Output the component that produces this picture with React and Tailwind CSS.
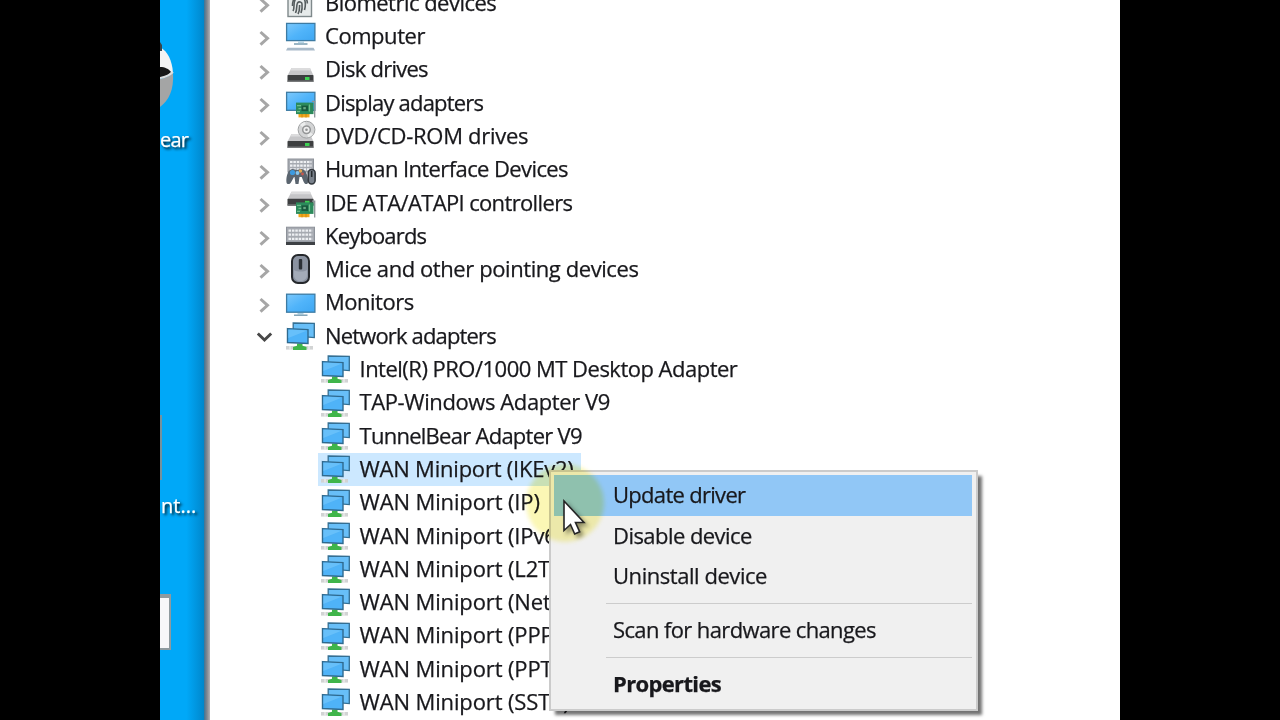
import { useId } from "react";

function Screen({ x, y, w, h }) {
  const id = useId();
  return (
    <>
      <defs>
        <linearGradient id={id} x1="0" y1="0" x2="1" y2="1">
          <stop offset="0" stopColor="#7cc8fb" />
          <stop offset="0.5" stopColor="#50b4fa" />
          <stop offset="1" stopColor="#3ea6f2" />
        </linearGradient>
      </defs>
      <rect
        x={x}
        y={y}
        width={w}
        height={h}
        fill={`url(#${id})`}
        stroke="#3d7ba3"
        strokeWidth="1.3"
      />
    </>
  );
}

function Drive({ y = 0 }) {
  return (
    <g transform={`translate(0 ${y})`}>
      <path d="M5.5 0H24l3.500 7.500h-26z" fill="#c6c6c8" />
      <path d="M5.500 0H24l1 2.500H4.500z" fill="#dcdcdd" />
      <rect x="1.500" y="7" width="26" height="7" rx="0.8" fill="#3d3f40" />
      <rect x="1.500" y="12.500" width="26" height="1.500" fill="#77797a" />
      <rect x="19" y="9" width="4.500" height="3" fill="#3fd054" />
    </g>
  );
}

function Card({ y = 0 }) {
  return (
    <g transform={`translate(0 ${y})`}>
      <rect x="12.500" y="13" width="11" height="3.800" fill="#f2a71c" />
      <path d="M16 13v4M20 13v4" stroke="#c67e10" strokeWidth="0.8" />
      <rect x="10" y="2" width="17.500" height="11.500" fill="#2c8a5b" />
      <path
        d="M11 5h4M11 11h3M23.500 4v7M12.500 8h3"
        stroke="#6fbf8c"
        strokeWidth="1.2"
      />
      <rect x="15.500" y="5" width="6.500" height="5.500" fill="#17593c" />
      <rect x="17.300" y="6.500" width="2.500" height="2.200" fill="#69a983" />
      <path d="M26 0.700h2.700V17" fill="none" stroke="#8c9498" strokeWidth="1.3" />
    </g>
  );
}

function Keys({ x, y, w, h }) {
  return (
    <>
      <rect x={x} y={y} width={w} height={h} fill="#a6aab1" stroke="#8d929a" />
      {[0.2, 0.48, 0.76].map((f) => (
        <path
          key={f}
          d={`M${x + 2} ${y + h * f + 0.4}H${x + w - 2}`}
          stroke="#eef0f3"
          strokeWidth="2.2"
          strokeDasharray="2.5 0.9"
        />
      ))}
    </>
  );
}

const ICONS = {
  biometric: (
    <>
      <rect x="2" y="4" width="23.500" height="24.500" fill="#e6eaea" stroke="#7f898b" strokeWidth="1.400" />
      <g fill="none" stroke="#565d5f" strokeWidth="1.600">
        <path d="M7 23c2-3 0-8 2-11 3-4 9-3 10 1 .6 3 .4 6-.5 9" />
        <path d="M9.500 25c2-4 .5-7 2-10 1.500-2 4.500-1 4.500 1 .4 3 0 6-1 9" />
        <path d="M12 26c1.800-3 1.500-6 1.600-9M6.500 18c0-5 1-8 4-9.500M14 7.500c4 0 7.500 3 7.300 8" />
      </g>
    </>
  ),
  computer: (
    <>
      <Screen x={0.6} y={2.4} w={28.3} h={17.2} />
      <path d="M12 20h6v2h-6z" fill="#b9d6e6" />
      <path d="M8 23h13.500" stroke="#6f97ad" strokeWidth="1.400" />
      <path d="M1.500 26.800h26l1.500 2.800H0z" fill="#a9bac9" />
    </>
  ),
  disk: <Drive y={13} />,
  display: (
    <>
      <Screen x={0.6} y={4.3} w={28.3} h={18} />
      <Card y={12.6} />
    </>
  ),
  dvd: (
    <>
      <Drive y={13} />
      <circle cx="20.500" cy="8.700" r="8.400" fill="#d3d4d5" stroke="#a0a2a3" strokeWidth="1" />
      <path d="M20.500 8.700 14 4a8 8 0 0 1 5-3zM20.500 8.700l6.500 4.500a8 8 0 0 1-5 3z" fill="#eceded" />
      <circle cx="20.500" cy="8.700" r="3.800" fill="#eeeeee" stroke="#939596" strokeWidth="1.500" />
      <circle cx="20.500" cy="8.700" r="1.300" fill="#909293" />
    </>
  ),
  hid: (
    <>
      <Keys x={2} y={4} w={25.5} h={13} />
      <path
        d="M4 15c3-2 5 0 7 0s4-2 7 0c3 2 4.500 9 4 12.500-.5 2.500-3.500 2-4.500-1l-1.800-4.500h-2.200l-1 7h-3l-1-7H8L5.500 26.500c-1 3-4.500 3.500-5 1C0 24 1 17 4 15z"
        fill="#5b656f"
      />
      <circle cx="6.500" cy="17.500" r="2.600" fill="#3d9adf" />
      <circle cx="14.500" cy="16" r="1.700" fill="#e3a650" />
      <circle cx="11.500" cy="18" r="1.900" fill="#83c5ee" />
      <circle cx="16.500" cy="19" r="1.400" fill="#c9574c" />
      <rect x="22.300" y="14.500" width="6.800" height="14.500" rx="3.400" fill="#7a828c" stroke="#34393f" strokeWidth="1.600" />
      <path d="M25.700 16v6" stroke="#252a2e" strokeWidth="1.600" />
    </>
  ),
  ide: (
    <>
      <Drive y={3.8} />
      <Card y={12.4} />
    </>
  ),
  keyboard: (
    <>
      <Keys x={0.5} y={6.2} w={28} h={14.8} />
      <rect x="0" y="21" width="29" height="3" fill="#3e4145" />
    </>
  ),
  mouse: (
    <>
      <rect x="6" y="1" width="17" height="28" rx="6" fill="#8b93a1" stroke="#25282c" strokeWidth="2" />
      <path d="M8 16c3 2 10 2 13 0v5c0 8-13 8-13 0z" fill="#a3abb8" />
      <rect x="12.800" y="5" width="3.400" height="10.500" rx="1" fill="#2b3036" />
    </>
  ),
  monitor: (
    <>
      <Screen x={0.6} y={6.2} w={28.3} h={18} />
      <path d="M11.500 25h6v1.500h-6z" fill="#a9cfe3" />
      <path d="M8 27.200h13.500" stroke="#6f97ad" strokeWidth="1.300" />
    </>
  ),
  network: (
    <>
      <rect x="0" y="25" width="27" height="3.600" fill="#d2d4d4" />
      <path d="M4 25v3.600M23 25v3.600" stroke="#f1f1f1" strokeWidth="1.200" />
      <path d="M11 22.500h5.500v2.300l4 1.200v3H7v-3l4-1.200z" fill="#3fb54a" />
      <path d="M7.200 2 28.300 2.400v14.200L7.200 15z" fill="#68bff8" stroke="#346f93" strokeWidth="1.300" />
      <path d="M1.500 7.600 22 8.600v13.800L1.500 21.500z" fill="#4fb3f8" stroke="#2f6a8f" strokeWidth="1.400" />
      <path d="M2.300 8.500 21.200 9.500 2.300 17z" fill="#78c8fb" opacity="0.6" />
    </>
  ),
};

const CATEGORIES = [
  { icon: "biometric", label: "Biometric devices", tracking: "tracking-[-0.52px]" },
  { icon: "computer", label: "Computer", tracking: "tracking-[-0.45px]" },
  { icon: "disk", label: "Disk drives", tracking: "tracking-[-0.76px]" },
  { icon: "display", label: "Display adapters", tracking: "tracking-[-0.8px]" },
  { icon: "dvd", label: "DVD/CD-ROM drives", tracking: "tracking-[-0.28px]" },
  { icon: "hid", label: "Human Interface Devices", tracking: "tracking-[-0.6px]" },
  { icon: "ide", label: "IDE ATA/ATAPI controllers", tracking: "tracking-[-0.64px]" },
  { icon: "keyboard", label: "Keyboards", tracking: "tracking-[-0.84px]" },
  { icon: "mouse", label: "Mice and other pointing devices", tracking: "tracking-[-0.42px]" },
  { icon: "monitor", label: "Monitors", tracking: "tracking-[-0.5px]" },
  { icon: "network", label: "Network adapters", tracking: "tracking-[-0.84px]", open: true },
];

const ADAPTERS = [
  { label: "Intel(R) PRO/1000 MT Desktop Adapter", tracking: "tracking-[-0.51px]" },
  { label: "TAP-Windows Adapter V9", tracking: "tracking-[-0.4px]" },
  { label: "TunnelBear Adapter V9", tracking: "tracking-[-0.73px]" },
  { label: "WAN Miniport (IKEv2)", tracking: "tracking-[-0.22px]", selected: true },
  { label: "WAN Miniport (IP)", tracking: "tracking-[-0.13px]" },
  { label: "WAN Miniport (IPv6)", tracking: "tracking-[-0.13px]" },
  { label: "WAN Miniport (L2TP)", tracking: "tracking-[-0.13px]" },
  { label: "WAN Miniport (Network Monitor)", tracking: "tracking-[-0.13px]" },
  { label: "WAN Miniport (PPPOE)", tracking: "tracking-[-0.13px]" },
  { label: "WAN Miniport (PPTP)", tracking: "tracking-[-0.13px]" },
  { label: "WAN Miniport (SSTP)", tracking: "tracking-[-0.13px]" },
];

function DeviceIcon({ name }) {
  return (
    <svg width="30" height="30" viewBox="0 0 30 30" className="shrink-0 overflow-visible">
      {ICONS[name]}
    </svg>
  );
}

function Chevron({ open }) {
  return (
    <svg width="16" height="16" viewBox="0 0 16 16" fill="none" className="mr-[13px] mt-1 shrink-0">
      {open ? (
        <path d="M0.800 3.500 7.500 10l6.700-6.500" stroke="#484848" strokeWidth="3" />
      ) : (
        <path d="m3.500 2 7 6.300-7 6.300" stroke="#a6a6a6" strokeWidth="3" />
      )}
    </svg>
  );
}

function DeviceTree() {
  return (
    <div className="-mt-[13.600px] flex flex-col">
      {CATEGORIES.map(({ icon, label, tracking, open }) => (
        <div key={label} className="flex h-[33.300px] shrink-0 items-center pl-[47px]">
          <Chevron open={open} />
          <DeviceIcon name={icon} />
          <span className={`mb-[2.500px] ml-[9px] ${tracking}`}>{label}</span>
        </div>
      ))}
      {ADAPTERS.map(({ label, tracking, selected }) => (
        <div key={label} className="flex h-[33.300px] shrink-0 items-center pl-[108px]">
          <div
            className={`flex h-full items-center pl-[3px] pr-[7px] ${
              selected ? "bg-[#cce8ff]" : ""
            }`}
          >
            <DeviceIcon name="network" />
            <span className={`mb-[2.500px] ml-[8.500px] ${tracking}`}>{label}</span>
          </div>
        </div>
      ))}
    </div>
  );
}

function MenuItem({ children, className = "" }) {
  return (
    <div className={`flex h-[40.700px] items-center pb-[2.500px] pl-[59px] ${className}`}>
      <span>{children}</span>
    </div>
  );
}

function Separator() {
  return (
    <div className="flex h-[13px] items-center pl-[52px]">
      <div className="h-[1.500px] w-full bg-[#cccccc]" />
    </div>
  );
}

function ContextMenu() {
  return (
    <div className="absolute left-[549px] top-[470px] h-[241px] w-[429px] border-2 border-[#cbcbcb] bg-[#f0f0f0] py-[3px] pl-[3px] pr-1 shadow-[5px_5px_3px_-1px_rgba(0,0,0,0.55)]">
      <MenuItem className="bg-[#91c7f6] tracking-[-0.7px]">Update driver</MenuItem>
      <MenuItem className="tracking-[-0.55px]">Disable device</MenuItem>
      <MenuItem className="tracking-[-0.45px]">Uninstall device</MenuItem>
      <Separator />
      <MenuItem className="tracking-[-0.62px]">Scan for hardware changes</MenuItem>
      <Separator />
      <MenuItem className="font-bold tracking-[-0.65px]">Properties</MenuItem>
    </div>
  );
}

function Pointer() {
  return (
    <>
      <div className="absolute left-[526px] top-[464px] h-[78px] w-[78px] rounded-full bg-[#f8f06c]/50 mix-blend-multiply blur-[2px]" />
      <svg
        width="28"
        height="40"
        viewBox="0 0 28 40"
        className="absolute left-[562px] top-[499px] drop-shadow-[3px_3px_2px_rgba(0,0,0,0.4)]"
      >
        <path
          d="M2 2v29.500l6.500-6 4.200 9.500 5-2.200-4.200-9.300H22z"
          fill="#ffffff"
          stroke="#252525"
          strokeWidth="1.600"
        />
      </svg>
    </>
  );
}

function Desktop() {
  return (
    <div className="relative h-full w-[44px] shrink-0 overflow-hidden bg-[#00a8f8] text-[20px] tracking-normal text-white">
      <div className="h-full w-full bg-linear-to-r from-transparent from-60% to-[#0087cc]" />
      <svg width="20" height="80" viewBox="0 0 20 80" className="absolute left-0 top-[40px]">
        <path d="M0 7C8 12 12 20 13 33L0 36z" fill="#f3f3f3" />
        <path d="M0 2 2 5v6H0z" fill="#37454b" />
        <path d="M0 27c5 0 9 2 11 5-3 4-7 5-11 5z" fill="#171717" />
        <path d="M0 39c5-1 10-3 13-6 1 17-4 27-13 34z" fill="#a4a5a5" />
        <path d="M0 38c5-1 10-3 13-6" fill="none" stroke="#dedede" strokeWidth="2" />
      </svg>
      <span className="absolute left-0 top-[125px] tracking-[-0.8px] [text-shadow:2px_2px_3px_#000]">
        ear
      </span>
      <div className="absolute left-0 top-[415px] h-[65px] w-[1.500px] bg-[#77919c]" />
      <span className="absolute left-px top-[491px] whitespace-nowrap [text-shadow:2px_2px_3px_#000]">
        nt...
      </span>
      <div className="absolute -left-4 top-[594px] h-[56px] w-[27px] border-2 border-t-4 border-[#8e9a9f] bg-[#f7f7f9]" />
    </div>
  );
}

export default function App() {
  return (
    <div className="flex h-[720px] w-[1280px] justify-center overflow-hidden bg-black font-['Open_Sans','Noto_Sans',sans-serif] text-[22px] leading-[30px] text-[#18181c] [-webkit-text-stroke:0.25px]">
      <div className="flex h-full w-[960px] overflow-hidden">
        <Desktop />
        <div className="w-1.5 shrink-0 bg-linear-to-r from-[#3c7394] via-[#80868f] to-[#b4b4b8]" />
        <div className="h-full min-w-0 flex-1 overflow-hidden whitespace-nowrap bg-white">
          <DeviceTree />
        </div>
      </div>
      <ContextMenu />
      <Pointer />
    </div>
  );
}
